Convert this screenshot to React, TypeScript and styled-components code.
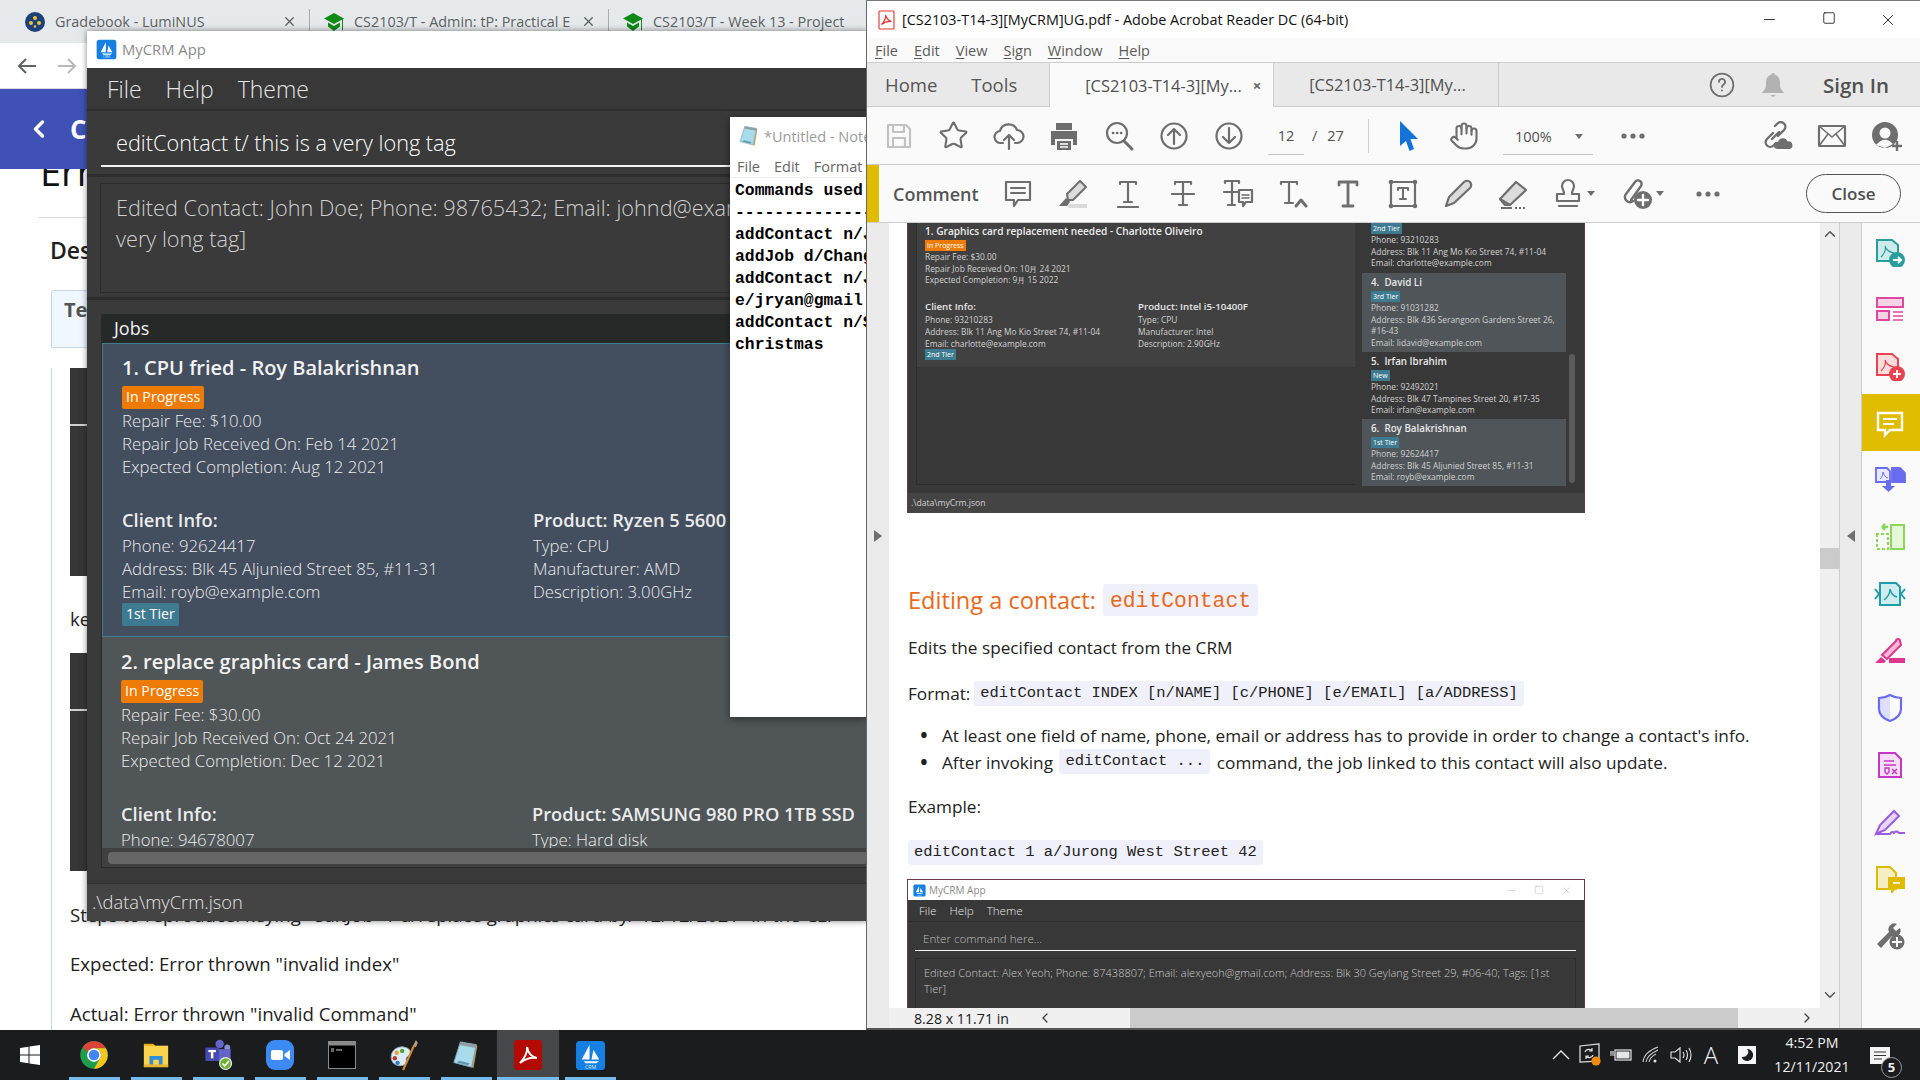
import React from "react";
import styled, { createGlobalStyle } from "styled-components";
import { ChevronLeft, ChevronRight, ChevronUp, ChevronDown, Hand, Star, X, Minus, Square } from "lucide-react";

const GlobalStyle = createGlobalStyle`
  html, body { margin: 0; padding: 0; background: #1b1c1e; }
  * { box-sizing: border-box; }
  body { font-family: "Open Sans", "Liberation Sans", sans-serif; }
  svg { flex: none; }
`;

const sans = `"Open Sans", "Liberation Sans", sans-serif`;
const mono = `"Liberation Mono", "DejaVu Sans Mono", monospace`;

/* ---------- desktop ---------- */
const Desktop = styled.div`
  width: 1920px;
  height: 1080px;
  display: flex;
  flex-direction: column;
  overflow: hidden;
`;
const WindowArea = styled.div`
  position: relative;
  height: 1030px;
  background: #fff;
`;

/* ---------- browser behind ---------- */
const BrowserWindow = styled.div`
  position: absolute;
  z-index: 0;
  left: 0;
  top: 0;
  width: 867px;
  height: 1030px;
  display: flex;
  flex-direction: column;
  background: #fff;
  overflow: hidden;
`;
const TabStrip = styled.div`
  height: 43px;
  background: #e6e9ec;
  display: flex;
  padding: 0 0 0 11px;
  align-items: center;
`;
const BrowserTab = styled.div`
  width: 299px;
  flex: none;
  height: 26px;
  padding: 0 12px 0 14px;
  display: flex;
  align-items: center;
  gap: 10px;
  border-right: 1px solid #a9acb0;
  font-size: 14.4px;
  color: #5c5f62;
  white-space: nowrap;
`;
const TabTitle = styled.span`
  flex: 1;
  overflow: hidden;
`;
const NavBar = styled.div`
  height: 46px;
  display: flex;
  align-items: center;
  gap: 16px;
  padding-left: 15px;
  border-bottom: 1px solid #dcdcdc;
`;
const BlueBand = styled.div`
  height: 80px;
  background: #3f51b5;
  display: flex;
  align-items: center;
  gap: 17px;
  padding-left: 25px;
  color: #fff;
  font-size: 26px;
  font-weight: 700;
  position: relative;
  z-index: 1;
`;
const PageBody = styled.div`
  flex: 1;
  padding-left: 38px;
  color: #1e1e1e;
  overflow: hidden;
`;
const PageHeading = styled.h1`
  margin: -27px 0 0;
  height: 76px;
  line-height: 58px;
  padding-left: 2px;
  font-size: 38px;
  font-weight: 500;
  color: #111;
  border-bottom: 1px solid #ddd;
`;
const PageSub = styled.h2`
  margin: 15px 0 0 12px;
  font-size: 23px;
  line-height: 34px;
  font-weight: 600;
`;
const TabHead = styled.div`
  margin: 23px 0 0 13px;
  height: 58px;
  background: #f1f7ff;
  border: 1px solid #c5d6ef;
  border-radius: 3px 3px 0 0;
  padding: 5px 0 0 12px;
  font-size: 20px;
  font-weight: 700;
  color: #555;
`;
const TabBody = styled.div`
  margin-left: 13px;
  padding-left: 18px;
  border-left: 1px solid #c5d6ef;
  height: 700px;
`;
const ShotBlock = styled.div<{ $h: number; $mt: number }>`
  width: 760px;
  height: ${(p) => p.$h}px;
  margin-top: ${(p) => p.$mt}px;
  background: #363636;
  padding-top: 56px;
`;
const ShotLine = styled.div`
  height: 2px;
  background: #cfcfcf;
`;
const BugText = styled.p<{ $mt: number }>`
  margin: ${(p) => p.$mt}px 0 0;
  font-size: 18.6px;
  line-height: 30px;
  white-space: nowrap;
  color: #222;
`;

/* ---------- MyCRM window ---------- */
const CrmWindow = styled.div`
  position: absolute;
  left: 87px;
  top: 31px;
  width: 781px;
  height: 890px;
  display: flex;
  flex-direction: column;
  background: #3a3a3a;
  box-shadow: 0 0 6px rgba(0, 0, 0, 0.5);
  overflow: hidden;
`;
const CrmTitleBar = styled.div`
  height: 37px;
  padding-bottom: 1px;
  background: #fff;
  display: flex;
  align-items: center;
  gap: 5px;
  padding-left: 9px;
  font-size: 14.8px;
  color: #8a8a8a;
`;
const CrmMenu = styled.div`
  height: 43px;
  background: #383838;
  display: flex;
  align-items: center;
  gap: 24px;
  padding-left: 20px;
  font-size: 23px;
  font-weight: 300;
  color: #e6e6e6;
  border-bottom: 2px solid #2e2e2e;
`;
const CommandBox = styled.div`
  height: 66px;
  padding: 12px 0 0 14px;
  border-bottom: 3px solid #2d2d2d;
`;
const CommandInput = styled.div`
  height: 44px;
  padding-left: 15px;
  line-height: 40px;
  border-bottom: 2px solid #f4f4f4;
  font-size: 21.7px;
  font-weight: 300;
  color: #fff;
  white-space: nowrap;
`;
const ResultBox = styled.div`
  height: 123px;
  padding: 6px 0 0 13px;
  border-bottom: 3px solid #2d2d2d;
`;
const ResultInner = styled.div`
  height: 110px;
  border: 1px solid #2b2b2b;
  padding: 8px 0 0 15px;
  font-size: 21.7px;
  font-weight: 300;
  line-height: 31px;
  color: #d0d0d0;
  white-space: nowrap;
`;
const JobsPanel = styled.div`
  margin: 14px 0 0 14px;
  height: 554px;
  display: flex;
  flex-direction: column;
  border-bottom: 1px solid #2b2b2b;
  border-left: 1px solid #2b2b2b;
`;
const JobsHeader = styled.div`
  height: 29px;
  flex: none;
  background: #272828;
  padding-left: 12px;
  line-height: 29px;
  font-size: 18px;
  color: #f2f2f2;
`;
const JobsList = styled.div`
  flex: 1;
  overflow: hidden;
`;
const JobCard = styled.div<{ $selected?: boolean }>`
  height: 294px;
  padding: ${(p) => (p.$selected ? 10 : 11)}px 0 0 19px;
  background: ${(p) => (p.$selected ? "#434e5f" : "#505557")};
  border: ${(p) => (p.$selected ? "1px solid #3d7f90" : "none")};
  border-right: none;
  color: #ececec;
  font-size: 16.75px;
  line-height: 23px;
  font-weight: 300;
  white-space: nowrap;
`;
const JobTitle = styled.div`
  font-size: 20px;
  line-height: 28px;
  font-weight: 600;
  color: #f2f2f2;
`;
const Badge = styled.span<{ $color: string }>`
  display: block;
  width: fit-content;
  height: 23px;
  padding: 0 4px;
  border-radius: 2px;
  background: ${(p) => p.$color};
  color: #fff;
  font-size: 14.2px;
  line-height: 22px;
  font-weight: 400;
`;
const StatusBadge = styled(Badge)`
  margin: 4px 0 0;
`;
const InfoColumns = styled.div`
  display: grid;
  grid-template-columns: 411px 1fr;
  margin-top: 28px;
`;
const InfoHead = styled.div`
  font-size: 18.25px;
  line-height: 28px;
  font-weight: 600;
  color: #ececec;
`;
const HScroll = styled.div`
  height: 19px;
  flex: none;
  background: #3f3f3f;
  padding: 4px 0 3px 6px;
`;
const HThumb = styled.div`
  height: 100%;
  background: #666;
  border-radius: 4px;
`;
const CrmStatus = styled.div`
  margin-top: 15px;
  height: 38px;
  background: #444;
  border-top: 1px solid #323232;
  padding-left: 5px;
  line-height: 35px;
  font-size: 18.3px;
  font-weight: 300;
  color: #e2e2e2;
`;

/* ---------- notepad ---------- */
const NotepadWindow = styled.div`
  position: absolute;
  left: 730px;
  top: 117px;
  width: 137px;
  height: 600px;
  background: #fff;
  box-shadow: 0 2px 8px rgba(0, 0, 0, 0.45);
  overflow: hidden;
  white-space: nowrap;
`;
const NoteTitle = styled.div`
  height: 38px;
  display: flex;
  align-items: center;
  gap: 4px;
  padding-left: 8px;
  font-size: 14.5px;
  color: #9a9a9a;
`;
const NoteMenu = styled.div`
  height: 23px;
  display: flex;
  gap: 14px;
  padding-left: 7px;
  align-items: center;
  font-size: 14.5px;
  color: #666;
  border-bottom: 1px solid #eee;
`;
const NoteText = styled.div`
  padding: 2px 0 0 5px;
  font-family: ${mono};
  font-weight: 700;
  font-size: 16.4px;
  line-height: 22px;
  color: #000;
`;

/* ---------- acrobat ---------- */
const AcrobatWindow = styled.div`
  position: absolute;
  left: 866px;
  top: 0;
  width: 1054px;
  height: 1030px;
  display: flex;
  flex-direction: column;
  background: #fafafa;
  border-left: 1px solid #666;
  border-top: 1px solid #777;
  border-bottom: 2px solid #555;
  font-family: ${sans};
  color: #505050;
  overflow: hidden;
`;
const AcroTitle = styled.div`
  height: 37px;
  flex: none;
  background: #fff;
  display: flex;
  align-items: center;
  padding-left: 11px;
  gap: 7px;
  font-size: 14.4px;
  color: #111;
`;
const WinButtons = styled.div`
  margin-left: auto;
  display: flex;
  padding-right: 3px;
  color: #111;
`;
const WinButton = styled.span`
  width: 59px;
  display: flex;
  justify-content: center;
`;
const AcroMenu = styled.div`
  height: 25px;
  flex: none;
  display: flex;
  align-items: center;
  gap: 16px;
  padding-left: 8px;
  font-size: 14.5px;
  color: #5a5a5a;
  border-bottom: 1px solid #cdcdcd;
  u { text-underline-offset: 2px; }
`;
const AcroTabs = styled.div`
  height: 44px;
  flex: none;
  display: flex;
  align-items: stretch;
  background: #e9e9e9;
  border-bottom: 1px solid #cdcdcd;
`;
const TopLink = styled.div<{ $pl: number }>`
  display: flex;
  align-items: center;
  padding-left: ${(p) => p.$pl}px;
  font-size: 18.5px;
  color: #555;
`;
const DocTab = styled.div<{ $active?: boolean }>`
  width: 225px;
  padding-left: 35px;
  display: flex;
  align-items: center;
  font-size: 16.4px;
  color: #505050;
  white-space: nowrap;
  border-right: 1px solid #cdcdcd;
  background: ${(p) => (p.$active ? "#fafafa" : "transparent")};
  border-left: ${(p) => (p.$active ? "1px solid #cdcdcd" : "none")};
  margin-bottom: ${(p) => (p.$active ? "-1px" : "0")};
  margin-left: ${(p) => (p.$active ? "32px" : "0")};
`;
const TabClose = styled.span`
  margin-left: 11px;
  font-size: 15px;
  font-weight: 700;
  color: #666;
`;
const TabRight = styled.div`
  margin-left: auto;
  display: flex;
  align-items: center;
  padding-right: 31px;
`;
const BellIcon = styled.svg`
  margin-left: 25px;
`;
const SignIn = styled.span`
  margin-left: 38px;
  font-size: 20.5px;
  font-weight: 600;
  color: #505050;
`;
const ToolRow = styled.div`
  height: 58px;
  flex: none;
  display: flex;
  align-items: center;
  padding-left: 4px;
  border-bottom: 1px solid #cdcdcd;
`;
const CommentRow = styled(ToolRow)`
  padding-left: 0;
`;
const IconCell = styled.div<{ $ml?: number; $caret?: boolean }>`
  width: 55px;
  height: 40px;
  flex: none;
  display: flex;
  align-items: center;
  justify-content: center;
  gap: ${(p) => (p.$caret ? 3 : 0)}px;
  padding-left: ${(p) => (p.$caret ? 10 : 0)}px;
  margin-left: ${(p) => p.$ml ?? 0}px;
`;
const PageField = styled.div`
  margin-left: 12px;
  width: 36px;
  height: 36px;
  padding-top: 3px;
  text-align: center;
  font-size: 14.5px;
  line-height: 28px;
  color: #505050;
  border-bottom: 1px solid #c4c4c4;
  margin-top: 2px;
`;
const PageTotal = styled.div`
  margin-left: 8px;
  width: 33px;
  display: flex;
  gap: 10px;
  font-size: 14.5px;
  color: #505050;
`;
const ToolSep = styled.div`
  width: 1px;
  height: 34px;
  margin-left: 23px;
  background: #cfcfcf;
`;
const ZoomField = styled.div`
  margin-left: 12px;
  width: 90px;
  height: 36px;
  margin-top: 2px;
  display: flex;
  align-items: center;
  padding: 0 0 0 12px;
  gap: 23px;
  font-size: 14.5px;
  border-bottom: 1px solid #c4c4c4;
`;
const Caret = styled.span`
  width: 0;
  height: 0;
  flex: none;
  border-left: 4.5px solid transparent;
  border-right: 4.5px solid transparent;
  border-top: 5px solid #6e6e6e;
`;
const RowEnd = styled.div`
  margin-left: auto;
  display: flex;
  align-items: center;
  padding-right: 6px;
`;
const CommentStripe = styled.div`
  width: 12px;
  height: 100%;
  background: #e0bc00;
`;
const CommentLabel = styled.div`
  width: 111.5px;
  padding-left: 14px;
  font-size: 18px;
  font-weight: 600;
  color: #555;
`;
const CloseButton = styled.div`
  margin-left: auto;
  margin-right: 19px;
  width: 95px;
  height: 39px;
  border: 1.5px solid #555;
  border-radius: 20px;
  display: flex;
  align-items: center;
  justify-content: center;
  font-size: 17px;
  font-weight: 600;
  color: #505050;
`;
const DocRow = styled.div`
  flex: 1;
  min-height: 0;
  display: flex;
  background: #fff;
`;
const LeftGutter = styled.div`
  width: 22px;
  flex: none;
  background: #ebebeb;
  display: flex;
  align-items: center;
  justify-content: center;
  padding-bottom: 180px;
`;
const DocColumn = styled.div`
  flex: 1;
  min-width: 0;
  display: flex;
  flex-direction: column;
`;
const DocPage = styled.div`
  flex: 1;
  min-height: 0;
  overflow: hidden;
  padding-left: 19px;
  background: #fff;
  font-size: 17.2px;
  color: #222;
`;
const HBar = styled.div`
  height: 20px;
  flex: none;
  display: flex;
  align-items: center;
  background: #f0f0f0;
  padding-right: 5px;
`;
const SizeLabel = styled.div`
  width: 126px;
  padding-left: 3px;
  margin-left: 22px;
  font-size: 14.2px;
  color: #1b1b1b;
`;
const HBarThumb = styled.div`
  flex: 1;
  height: 100%;
  margin: 0 61px 0 77px;
  background: #cbcbcb;
`;
const VScroll = styled.div`
  width: 20px;
  flex: none;
  background: #f0f0f0;
  padding-top: 2px;
  display: flex;
  flex-direction: column;
  align-items: center;
  border-right: 1px solid #cdcdcd;
  color: #555;
`;
const VThumb = styled.div`
  width: 19px;
  height: 21px;
  margin-top: 305px;
  margin-bottom: 417px;
  background: #cbcbcb;
`;
const SideCollapse = styled.div`
  width: 22px;
  flex: none;
  background: #ebebeb;
  border-right: 1px solid #cdcdcd;
  display: flex;
  align-items: center;
  justify-content: center;
  padding-bottom: 180px;
`;
const ToolRail = styled.div`
  width: 58px;
  flex: none;
  background: #fafafa;
  display: flex;
  flex-direction: column;
  align-items: stretch;
`;
const RailItem = styled.div<{ $active?: boolean }>`
  height: 57px;
  padding-right: 3px;
  display: flex;
  align-items: center;
  justify-content: center;
  background: ${(p) => (p.$active ? "#e0bc00" : "transparent")};
`;

/* pdf content */
const Shot = styled.div`
  margin-left: -1px;
  width: 678px;
  height: 290px;
  background: #383838;
  display: flex;
  flex-direction: column;
  border-left: 1px solid #6a3a48;
  border-right: 1px solid #6a3a48;
  color: #d2d2d2;
  font-size: 8.4px;
  line-height: 11.7px;
  white-space: nowrap;
  overflow: hidden;
`;
const ShotBody = styled.div`
  height: 262px;
  margin-bottom: 8px;
  display: flex;
  padding-left: 8px;
  flex: none;
`;
const MiniPanel = styled.div`
  width: 439px;
  flex: none;
  border-bottom: 1px solid #2e2e2e;
  border-left: 1px solid #2e2e2e;
`;
const MiniCard = styled.div`
  height: 144px;
  background: #414141;
  padding-left: 8px;
`;
const MiniJobTitle = styled.div`
  font-size: 10.15px;
  line-height: 17px;
  font-weight: 600;
  color: #ececec;
`;
const MiniBadge = styled.span<{ $color: string }>`
  display: block;
  width: fit-content;
  height: 11px;
  padding: 0 2px;
  background: ${(p) => p.$color};
  color: #fff;
  font-size: 7px;
  line-height: 11px;
`;
const MiniColumns = styled.div`
  display: grid;
  grid-template-columns: 213px 1fr;
  margin-top: 14px;
`;
const MiniHead = styled.div`
  font-size: 9.7px;
  line-height: 14px;
  font-weight: 600;
  color: #e6e6e6;
`;
const MiniList = styled.div`
  width: 204px;
  margin-left: 7px;
  flex: none;
`;
const MiniPerson = styled.div<{ $alt?: boolean }>`
  padding: 2px 0 3px 9px;
  background: ${(p) => (p.$alt ? "#4f5558" : "transparent")};
`;
const PersonName = styled.div`
  font-size: 9.8px;
  line-height: 16px;
  font-weight: 600;
  color: #e9e9e9;
`;
const PersonTop = styled.div`
  padding: 0 0 3px 9px;
  height: 50px;
`;
const MiniTrack = styled.div`
  width: 6px;
  margin-left: 3px;
  padding-top: 131px;
`;
const MiniThumb = styled.div`
  height: 129px;
  background: #5b5b5b;
  border-radius: 3px;
`;
const ShotStatus = styled.div`
  flex: 1;
  background: #444;
  padding-left: 3px;
  line-height: 20px;
  font-size: 8.6px;
`;
const DocHeading = styled.h3`
  margin: 71px 0 0;
  display: flex;
  align-items: center;
  gap: 7px;
  height: 32px;
  font-size: 23.6px;
  font-weight: 400;
  color: #e8681c;
`;
const HeadingCode = styled.code`
  height: 32px;
  padding: 0 7px;
  background: #f0f0fb;
  border-radius: 3px;
  font-family: ${mono};
  font-size: 21.4px;
  line-height: 34px;
  color: #e8681c;
`;
const DocPara = styled.p<{ $mt: number }>`
  margin: ${(p) => p.$mt}px 0 0;
  line-height: 25px;
  height: 25px;
  white-space: nowrap;
`;
const InlineCode = styled.code`
  display: inline-block;
  height: 25px;
  padding: 0 6px;
  margin: 0 2px;
  background: #f0f0fb;
  border-radius: 3px;
  font-family: ${mono};
  font-size: 15.45px;
  line-height: 25px;
  vertical-align: top;
  color: #222;
`;
const FormatCode = styled(InlineCode)`
  margin-left: 4px;
`;
const BulletList = styled.ul`
  margin: 16px 0 0;
  padding: 0 0 0 34px;
  list-style: none;
  line-height: 27px;
  white-space: nowrap;
  li::before {
    content: "•";
    display: inline-block;
    width: 23px;
    margin-left: -23px;
    font-size: 26px;
    line-height: 20px;
    vertical-align: -2px;
  }
`;
const BlockCode = styled(InlineCode)`
  display: block;
  width: fit-content;
  margin: 21px 0 0;
`;
const SecondShot = styled.div`
  margin: 14px 0 0 -1px;
  width: 678px;
  height: 130px;
  background: #383838;
  color: #c9c9c9;
  white-space: nowrap;
  overflow: hidden;
  border: 1px solid #6a3a48;
  border-bottom: none;
`;
const ShotTitle = styled.div`
  height: 20px;
  background: #fff;
  display: flex;
  align-items: center;
  padding-left: 5px;
  gap: 3px;
  font-size: 10px;
  color: #8a8a8a;
`;
const ShotWinButtons = styled.div`
  margin-left: auto;
  display: flex;
  gap: 17px;
  padding-right: 12px;
  color: #aaa;
`;
const ShotMenu = styled.div`
  height: 22px;
  display: flex;
  align-items: center;
  gap: 13px;
  padding-left: 11px;
  font-size: 11.6px;
  font-weight: 300;
  color: #e4e4e4;
  border-bottom: 1px solid #2e2e2e;
`;
const ShotInput = styled.div`
  margin: 0 8px 0 7px;
  height: 29px;
  padding: 7px 0 0 8px;
  line-height: 19px;
  font-size: 11.6px;
  font-weight: 300;
  color: #bdbdbd;
  border-bottom: 1.5px solid #f4f4f4;
`;
const ShotResult = styled.div`
  margin: 7px 8px 0 7px;
  height: 60px;
  border: 1px solid #2c2c2c;
  padding: 6px 0 0 8px;
  font-size: 11px;
  font-weight: 300;
  line-height: 16px;
`;

/* ---------- taskbar ---------- */
const Taskbar = styled.div`
  height: 50px;
  flex: none;
  background: #1b1c1e;
  display: flex;
  align-items: stretch;
  color: #fff;
`;
const StartButton = styled.div`
  width: 63px;
  display: flex;
  align-items: center;
  justify-content: center;
  padding-right: 4px;
`;
const TaskItem = styled.div<{ $active?: boolean }>`
  width: 62px;
  position: relative;
  display: flex;
  align-items: center;
  justify-content: center;
  background: ${(p) => (p.$active ? "#45474b" : "transparent")};
  &::after {
    content: "";
    position: absolute;
    bottom: 0;
    left: ${(p) => (p.$active ? 0 : 6)}px;
    right: ${(p) => (p.$active ? 0 : 5)}px;
    height: 3px;
    background: #76b9ed;
  }
`;
const Tray = styled.div`
  margin-left: auto;
  display: flex;
  align-items: center;
`;
const TrayIcon = styled.div<{ $ml?: number }>`
  width: 30px;
  margin-left: ${(p) => p.$ml ?? 0}px;
  display: flex;
  align-items: center;
  justify-content: center;
`;
const TrayLetter = styled.span`
  font-size: 24px;
  line-height: 1;
  font-weight: 300;
  color: #f0f0f0;
`;
const Clock = styled.div`
  width: 86px;
  margin-left: 7px;
  text-align: center;
  font-size: 14.2px;
  line-height: 24px;
  color: #efefef;
`;
const NotifyWrap = styled.div`
  position: relative;
  width: 42px;
  margin: 0 18px 0 5px;
  display: flex;
  padding-left: 10px;
`;
const NotifyCount = styled.span`
  position: absolute;
  left: 21px;
  top: 10px;
  width: 21px;
  height: 21px;
  border-radius: 50%;
  border: 1px solid #999;
  background: #1b1c1e;
  text-align: center;
  font-size: 13px;
  line-height: 19px;
  font-weight: 700;
  color: #eee;
`;

/* ---------- icons ---------- */
const G = "#6e6e6e";
const Line = ({ children, size = 32, color = G, w = 2.2 }: { children: React.ReactNode; size?: number; color?: string; w?: number }) => (
  <svg width={size} height={size} viewBox="0 0 32 32" fill="none" stroke={color} strokeWidth={w} strokeLinecap="round" strokeLinejoin="round">
    {children}
  </svg>
);

const CrmLogo = ({ size }: { size: number }) => (
  <svg width={size} height={size} viewBox="0 0 32 32">
    <rect x="1" y="1" width="30" height="30" rx="4" fill="#1580e2" />
    <path d="M7 20 L15 5 L15 20Z M17 20 L19 10 L25 20Z M9 22 H25 L22 24 H11Z" fill="#fff" />
    <text x="16" y="29.5" fontSize="5.4" fill="#cfe6fb" textAnchor="middle" fontFamily="Open Sans">CRM</text>
  </svg>
);
const NotepadIcon = ({ size }: { size: number }) => (
  <svg width={size} height={size} viewBox="0 0 32 32">
    <path d="M10 2 L27 5 L22 29 L3 24Z" fill="#a9dcea" stroke="#7fa8b4" />
    <path d="M22 29 L27 5 L28 7 L24 30Z" fill="#b69a6b" />
    <path d="M10 2 L27 5 L26.2 8.4 L9 5.2Z" fill="#8f9ea4" />
    <path d="M9 22 L20 25 L18 27 L6 24Z" fill="#5f96a8" />
  </svg>
);
const PdfTitleIcon = () => (
  <svg width="17" height="20" viewBox="0 0 17 20" fill="none" stroke="#e5312a" strokeWidth="1.1">
    <path d="M2 1 H15 a1 1 0 0 1 1 1 V18 a1 1 0 0 1-1 1 H2 a1 1 0 0 1-1-1 V2 a1 1 0 0 1 1-1z" />
    <path d="M3.5 14.5 C6 12 8 8 7.5 5 C8.5 8 10 10.5 13.5 11.5 C10 11 6.5 12 3.5 14.5z" />
  </svg>
);
const LumiIcon = () => (
  <svg width="20" height="20" viewBox="0 0 20 20">
    <circle cx="10" cy="10" r="10" fill="#1d3f7a" />
    <circle cx="10" cy="6" r="2" fill="#f0c430" />
    <circle cx="6" cy="11" r="2" fill="#f0c430" />
    <circle cx="14" cy="11" r="2" fill="#f0c430" />
    <circle cx="10" cy="14.5" r="1.3" fill="#f0c430" />
  </svg>
);
const CapIcon = () => (
  <svg width="20" height="22" viewBox="0 0 20 22">
    <path d="M10 2 L20 7.5 L10 13 L0 7.5Z" fill="#0e8a16" />
    <path d="M4 11.5 L10 15 L16 11.5 V15.5 L10 20 L4 15.5Z" fill="#0e8a16" />
    <path d="M18.5 8 V19" stroke="#0e8a16" strokeWidth="1" />
  </svg>
);
const Triangle = ({ dir }: { dir: "l" | "r" }) => (
  <svg width="10" height="14" viewBox="0 0 10 14">
    <path d={dir === "l" ? "M9 1 V13 L1 7Z" : "M1 1 V13 L9 7Z"} fill="#6e6e6e" />
  </svg>
);

const toolIcons = {
  save: (
    <Line color="#c2c2c2">
      <path d="M5 5 H23 L27 9 V27 H5Z M10 5 V12 H21 V5 M10 27 V18 H22 V27" />
    </Line>
  ),
  print: (
    <svg width="32" height="32" viewBox="0 0 32 32" fill={G}>
      <path d="M8 3 H24 V10 H8Z M3 11 H29 V25 H25 V19 H7 V25 H3Z M9 21 H23 V30 H9Z" />
      <path d="M12 24 H20 M12 27 H20" stroke="#fff" strokeWidth="1.4" />
    </svg>
  ),
  cloud: (
    <Line>
      <path d="M10 23 H8 a6 6 0 0 1-1-12 a9 9 0 0 1 17-1 a6.5 6.5 0 0 1 0 13 H22" />
      <path d="M16 29 V15 M11 20 L16 15 L21 20" />
    </Line>
  ),
  search: (
    <Line>
      <circle cx="14" cy="13" r="10" />
      <path d="M21 21 L29 29" strokeWidth="3" />
      <path d="M10 13 H10.2 M14 13 H14.2 M18 13 H18.2" strokeWidth="2.6" />
    </Line>
  ),
  up: (
    <Line>
      <circle cx="16" cy="16" r="12.5" />
      <path d="M16 24 V9 M10 15 L16 9 L22 15" />
    </Line>
  ),
  down: (
    <Line>
      <circle cx="16" cy="16" r="12.5" />
      <path d="M16 8 V23 M10 17 L16 23 L22 17" />
    </Line>
  ),
  cursor: (
    <svg width="24" height="32" viewBox="0 0 24 32">
      <path d="M3 1 L21 19 H13.5 L17 29 L12.5 31 L9 21 L3 26Z" fill="#1473d8" />
    </svg>
  ),
  more: (
    <svg width="24" height="6" viewBox="0 0 24 6" fill={G}>
      <circle cx="3" cy="3" r="2.6" />
      <circle cx="12" cy="3" r="2.6" />
      <circle cx="21" cy="3" r="2.6" />
    </svg>
  ),
  link: (
    <svg width="32" height="30" viewBox="0 0 32 30" fill="none" stroke={G} strokeWidth="2.4" strokeLinecap="round">
      <path d="M12 12 L6 18 a4.5 4.5 0 0 0 6.5 6.5 L15 22 M17 15 L23 9 a4.5 4.5 0 0 0-6.5-6.5 L14 5 M11 18 L18 11" />
      <path d="M16 28 a3.5 3.5 0 0 1 1-7 a5 5 0 0 1 9.5-0.5 a3.8 3.8 0 0 1 2 7.5Z" fill={G} stroke="none" />
    </svg>
  ),
  mail: (
    <Line>
      <rect x="3" y="6" width="26" height="20" rx="1" />
      <path d="M3 6 L16 17 L29 6 M3 26 L12 14 M29 26 L20 14" strokeWidth="1.6" />
    </Line>
  ),
  user: (
    <svg width="32" height="30" viewBox="0 0 32 30">
      <circle cx="14" cy="14" r="13" fill={G} />
      <circle cx="14" cy="12" r="5.5" fill="#fafafa" />
      <path d="M5 24 Q14 14 22 23 L14 27Z" fill="#fafafa" />
      <path d="M21 25 H31 M26 20 V30" stroke={G} strokeWidth="2.4" />
    </svg>
  ),
  comment: (
    <Line>
      <path d="M4 4 H28 V22 H16 L12 28 V22 H4Z" />
      <path d="M9 10 H23 M9 15 H23" strokeWidth="2" />
    </Line>
  ),
  highlight: (
    <svg width="32" height="32" viewBox="0 0 32 32">
      <path d="M10 16 L23 3 L29 9 L16 22 L11 22Z" fill="#dcdcdc" stroke="#6e6e6e" strokeWidth="2" strokeLinejoin="round" />
      <path d="M2 28 L9 20 L13 24 L10 28Z" fill="#6e6e6e" />
      <rect x="11" y="26" width="19" height="4" fill="#dadada" />
    </svg>
  ),
  tUnder: (
    <Line>
      <path d="M8 6 V4 H24 V6 M16 4 V24 M12 24 H20 M6 29 H26" />
    </Line>
  ),
  tStrike: (
    <Line>
      <path d="M8 6 V4 H24 V6 M16 4 V27 M12 27 H20 M5 16 H27" />
    </Line>
  ),
  tNote: (
    <Line>
      <path d="M3 5 V3 H17 V5 M10 3 V27 M6 27 H13 M2 14 H16" />
      <path d="M17 12 H30 V24 H24 L21 28 V24 H17Z" />
      <path d="M20 17 H27 M20 20 H27" strokeWidth="1.5" />
    </Line>
  ),
  tInsert: (
    <Line>
      <path d="M4 6 V4 H20 V6 M12 4 V25 M8 25 H16" />
      <path d="M19 28 L24 22 L29 28" strokeWidth="3" />
    </Line>
  ),
  t: (
    <Line>
      <path d="M7 7 V4 H25 V7 M16 4 V28 M11 28 H21" strokeWidth="2.8" />
    </Line>
  ),
  tBox: (
    <Line>
      <rect x="4" y="4" width="24" height="24" />
      <circle cx="4" cy="4" r="1.2" fill={G} />
      <circle cx="28" cy="4" r="1.2" fill={G} />
      <circle cx="4" cy="28" r="1.2" fill={G} />
      <circle cx="28" cy="28" r="1.2" fill={G} />
      <path d="M11 12 V10 H21 V12 M16 10 V21 M13 21 H19" strokeWidth="2" />
    </Line>
  ),
  pencil: (
    <svg width="32" height="32" viewBox="0 0 32 32" fill="none" stroke={G} strokeWidth="2.2" strokeLinejoin="round">
      <path d="M4 28 L7 19 L22 4 a3 3 0 0 1 6 6 L12 25Z" fill="#dcdcdc" />
    </svg>
  ),
  eraser: (
    <svg width="32" height="32" viewBox="0 0 32 32" fill="none" stroke={G} strokeWidth="2.2" strokeLinejoin="round">
      <path d="M3 21 L19 4 L29 12 L13 27 H8Z" fill="#dcdcdc" />
      <path d="M3 21 L13 27 M4 30 H15" />
      <path d="M18 30 H28" strokeDasharray="2 2" />
    </svg>
  ),
  stamp: (
    <Line>
      <path d="M12 16 C12 12 10 11 10 8 a6 6 0 0 1 12 0 C22 11 20 12 20 16 H27 V23 H5 V16Z M7 28 H25" />
    </Line>
  ),
  attach: (
    <svg width="32" height="32" viewBox="0 0 32 32" fill="none" stroke={G} strokeWidth="2.4" strokeLinecap="round">
      <path d="M10 22 L20 8 a3.5 3.5 0 0 0-6-4 L5 16 a5 5 0 0 0 7 7" />
      <circle cx="22" cy="22" r="9" fill={G} stroke="none" />
      <path d="M22 17 V27 M17 22 H27" stroke="#fff" />
    </svg>
  ),
};

const railIcons = [
  <svg key="0" width="30" height="30" viewBox="0 0 30 30" fill="none" stroke="#2a9d9d" strokeWidth="2">
    <path d="M2 3 H17 L23 8 V24 H2Z" fill="#cdebea" />
    <path d="M6 20 C10 16 11 12 10 9 C11 13 14 15 19 16" strokeWidth="1.2" />
    <circle cx="22" cy="23" r="7" fill="#2a9d9d" />
    <path d="M18 23 H26 M23 20 L26 23 L23 26" stroke="#fff" />
  </svg>,
  <svg key="1" width="30" height="26" viewBox="0 0 30 26" fill="none" stroke="#e0479e" strokeWidth="2">
    <rect x="2" y="2" width="26" height="9" fill="#f8d3e6" />
    <rect x="2" y="15" width="12" height="9" fill="#f8d3e6" />
    <path d="M18 16 H28 M18 20 H28 M18 24 H28" strokeWidth="1.3" />
  </svg>,
  <svg key="2" width="30" height="30" viewBox="0 0 30 30" fill="none" stroke="#e8434f" strokeWidth="2">
    <path d="M2 3 H17 L23 8 V24 H2Z" fill="#fbdcdc" />
    <path d="M6 20 C10 16 11 12 10 9 C11 13 14 15 19 16" strokeWidth="1.2" />
    <circle cx="22" cy="23" r="7" fill="#e8434f" />
    <path d="M18 23 H26 M22 19 V27" stroke="#fff" />
  </svg>,
  <svg key="3" width="30" height="30" viewBox="0 0 30 30" fill="none" stroke="#fff" strokeWidth="2.4">
    <path d="M3 5 H27 V22 H15 L10 27 V22 H3Z" />
    <path d="M8 11 H22 M8 16 H19" strokeWidth="2" />
  </svg>,
  <svg key="4" width="32" height="30" viewBox="0 0 32 30" fill="none" stroke="#6a6cf0" strokeWidth="1.8">
    <path d="M2 3 H13 L16 6 V17 H2Z" fill="#e8e9fd" />
    <path d="M18 3 H26 L31 8 V17 H18Z" fill="#6a6cf0" />
    <path d="M6 14 C8 12 9 10 9 7 C10 10 11 12 14 13" strokeWidth="1" />
    <path d="M12 15 H17 V21 H21 L14.5 27 L8 21 H12Z" fill="#6a6cf0" stroke="none" />
  </svg>,
  <svg key="5" width="30" height="28" viewBox="0 0 30 28" fill="none" stroke="#8bd75a" strokeWidth="2">
    <path d="M2 11 V26 H13 V11Z" strokeDasharray="3 2" />
    <rect x="16" y="2" width="13" height="24" fill="#e5f6da" />
    <path d="M13 4 L7 4 M7 4 L10 1 M7 4 L10 7" strokeWidth="2.4" />
  </svg>,
  <svg key="6" width="32" height="26" viewBox="0 0 32 26" fill="none" stroke="#1f9ca7" strokeWidth="2">
    <path d="M6 2 H22 L26 6 V24 H6Z" fill="#cfecee" />
    <path d="M1 8 L5 13 L1 18 M31 8 L27 13 L31 18" />
    <path d="M10 19 C14 16 16 13 16 8 C17 12 19 15 23 16" strokeWidth="1.4" />
  </svg>,
  <svg key="7" width="32" height="26" viewBox="0 0 32 26">
    <path d="M8 17 L22 3 a2 2 0 0 1 4 0 L27 7 L13 21Z" fill="#f3b9d6" stroke="#e0368f" strokeWidth="2" />
    <path d="M1 25 L7 19 L12 23 L10 25Z M15 20 H31 V25 H15Z" fill="#e0368f" />
  </svg>,
  <svg key="8" width="26" height="30" viewBox="0 0 26 30" fill="none" stroke="#6a6cf0" strokeWidth="2.2">
    <path d="M13 2 Q8 5 2 5 V16 Q2 24 13 28Z" fill="#dedffc" stroke="none" />
    <path d="M2 5 Q8 5 13 2 Q18 5 24 5 V16 Q24 24 13 28 Q2 24 2 16Z" />
  </svg>,
  <svg key="9" width="26" height="28" viewBox="0 0 26 28" fill="none" stroke="#c637c8" strokeWidth="2">
    <path d="M2 2 H18 L24 8 V26 H2Z" fill="#f6def7" />
    <path d="M7 10 H17 M7 14 H19" strokeWidth="1.4" />
    <path d="M8 17 H12 V21 L10 23 L8 21Z M15 18 L20 23 M20 18 L15 23" strokeWidth="1.4" />
  </svg>,
  <svg key="10" width="32" height="28" viewBox="0 0 32 28" fill="none" stroke="#9d5be0" strokeWidth="2">
    <path d="M2 26 L6 17 L20 3 L25 8 L11 22Z" fill="#e6d6f8" />
    <path d="M2 26 H16 C18 23 19 24 20 25 C22 22 24 24 25 25 H31" />
  </svg>,
  <svg key="11" width="30" height="28" viewBox="0 0 30 28" fill="none" stroke="#e0bc00" strokeWidth="2">
    <path d="M2 2 H15 L21 8 V24 H2Z" fill="#f7efc4" />
    <path d="M14 13 H29 V23 H20 L17 27 V23 H14Z" fill="#e0bc00" />
    <path d="M18 18 H25" stroke="#fff" strokeWidth="1.5" />
  </svg>,
  <svg key="12" width="30" height="28" viewBox="0 0 30 28">
    <path d="M2 22 L14 10 a6 6 0 0 1 8-8 L18 6 L21 9 L25 6 a6 6 0 0 1-8 8 L6 26Z" fill="#6e6e6e" />
    <circle cx="22" cy="20" r="7.5" fill="#6e6e6e" />
    <path d="M22 15 V25 M17 20 H27" stroke="#fff" strokeWidth="2" />
  </svg>,
];

const taskIcons = [
  <svg key="chrome" width="30" height="30" viewBox="0 0 48 48">
    <circle cx="24" cy="24" r="22" fill="#1e9e4a" />
    <path d="M24 2 A22 22 0 0 1 43 13 H24 A11 11 0 0 0 14 20 L6 11 A22 22 0 0 1 24 2Z" fill="#db4437" />
    <path d="M43 13 A22 22 0 0 1 24 46 L33.5 29.5 A11 11 0 0 0 24 13Z" fill="#f5c518" />
    <circle cx="24" cy="24" r="11" fill="#fff" />
    <circle cx="24" cy="24" r="8.5" fill="#4285f4" />
  </svg>,
  <svg key="files" width="28" height="28" viewBox="0 0 28 30">
    <path d="M1 3 H11 L14 6 H1Z" fill="#e8a91a" />
    <rect x="1" y="5" width="26" height="23" fill="#fbd34c" />
    <path d="M7 26 V16 H21 V26 H17 V20 H11 V26Z" fill="#2f8fd6" />
    <rect x="1" y="25" width="26" height="3" fill="#e8b530" />
  </svg>,
  <svg key="teams" width="32" height="32" viewBox="0 0 38 38">
    <circle cx="21" cy="6" r="5" fill="#6264c8" />
    <circle cx="30" cy="10" r="3.5" fill="#8b8cd6" />
    <path d="M14 12 H34 V26 H14Z" fill="#6264c8" />
    <rect x="4" y="10" width="16" height="16" rx="1" fill="#464ab0" />
    <rect x="10.5" y="13" width="3" height="10" fill="#fff" />
    <rect x="7.5" y="13" width="9" height="2.6" fill="#fff" />
    <circle cx="28" cy="29" r="7" fill="#6bb22e" stroke="#e8e8e8" strokeWidth="1.5" />
    <path d="M24.5 29 L27 32 L32 26" stroke="#fff" strokeWidth="2" fill="none" />
  </svg>,
  <svg key="zoom" width="28" height="30" viewBox="0 0 28 30">
    <rect width="28" height="30" rx="9" fill="#3d8af5" />
    <rect x="5" y="10" width="12" height="10" rx="2" fill="#fff" />
    <path d="M18.5 14 L24 10 V20 L18.5 16Z" fill="#fff" />
  </svg>,
  <svg key="cmd" width="28" height="28" viewBox="0 0 28 28">
    <rect x="0.5" y="0.5" width="27" height="27" fill="#000" stroke="#8a8a8a" />
    <rect x="1" y="1" width="26" height="3.5" fill="#8a8a8a" />
    <path d="M3 8 H6 M3 10 H6 M8 9 H14" stroke="#ccc" strokeWidth="1" />
  </svg>,
  <svg key="paint" width="30" height="33" viewBox="0 0 32 36">
    <path d="M2 21 C1 12 10 7 17 9 C25 11 24 17 20 19 C16 21 21 26 17 28 C10 31 3 28 2 21Z" fill="#d9edf7" stroke="#8fa6b2" />
    <circle cx="8" cy="15" r="2.4" fill="#e4a531" />
    <circle cx="14" cy="13" r="2.4" fill="#5a9e3a" />
    <circle cx="6" cy="21" r="2.4" fill="#c23a2e" />
    <circle cx="9" cy="26" r="2.4" fill="#2f7cc4" />
    <path d="M15 34 L27 7" stroke="#d68a2c" strokeWidth="2.4" />
    <path d="M26 7 L29 1 L31 4 L29 9Z" fill="#b9a27a" />
  </svg>,
  <NotepadIcon key="note" size={30} />,
  <svg key="acro" width="28" height="30" viewBox="0 0 28 30">
    <rect width="28" height="30" rx="3" fill="#b30b00" />
    <path d="M6 23 C10 19 14 12 13 7 C14 12 17 17 23 18 C17 17 11 19 6 23Z" fill="none" stroke="#fff" strokeWidth="2" />
  </svg>,
  <CrmLogo key="crm" size={31} />,
];

const Job = ({
  title, selected, fee, received, expected, phone, address, email, tier, product, type, maker, desc,
}: {
  title: string; selected?: boolean; fee: string; received: string; expected: string; phone: string;
  address?: string; email?: string; tier?: string; product: string; type: string; maker?: string; desc?: string;
}) => (
  <JobCard $selected={selected}>
    <JobTitle>{title}</JobTitle>
    <StatusBadge $color="#ee7b06">In Progress</StatusBadge>
    <div>Repair Fee: {fee}</div>
    <div>Repair Job Received On: {received}</div>
    <div>Expected Completion: {expected}</div>
    <InfoColumns>
      <div>
        <InfoHead>Client Info:</InfoHead>
        <div>Phone: {phone}</div>
        <div>Address: {address}</div>
        <div>Email: {email}</div>
        {tier && <Badge $color="#3e7b91">{tier}</Badge>}
      </div>
      <div>
        <InfoHead>Product: {product}</InfoHead>
        <div>Type: {type}</div>
        <div>Manufacturer: {maker}</div>
        <div>Description: {desc}</div>
      </div>
    </InfoColumns>
  </JobCard>
);

const Person = ({ name, tier, lines, alt }: { name: string; tier: string; lines: string[]; alt?: boolean }) => (
  <MiniPerson $alt={alt}>
    <PersonName>{name}</PersonName>
    <MiniBadge $color="#3e7b91">{tier}</MiniBadge>
    {lines.map((l) => (
      <div key={l}>{l}</div>
    ))}
  </MiniPerson>
);

const App = () => (
  <Desktop>
    <GlobalStyle />
    <WindowArea>
      <BrowserWindow>
        <TabStrip>
          <BrowserTab><LumiIcon /><TabTitle>Gradebook - LumiNUS</TabTitle><X size={15} /></BrowserTab>
          <BrowserTab><CapIcon /><TabTitle>CS2103/T - Admin: tP: Practical E</TabTitle><X size={15} /></BrowserTab>
          <BrowserTab><CapIcon /><TabTitle>CS2103/T - Week 13 - Project</TabTitle></BrowserTab>
        </TabStrip>
        <NavBar>
          <svg width="24" height="24" viewBox="0 0 24 24" fill="none" stroke="#5f6368" strokeWidth="2"><path d="M21 12 H4 M11 5 L4 12 L11 19" /></svg>
          <svg width="24" height="24" viewBox="0 0 24 24" fill="none" stroke="#b8b8b8" strokeWidth="2"><path d="M3 12 H20 M13 5 L20 12 L13 19" /></svg>
        </NavBar>
        <BlueBand>
          <ChevronLeft size={28} strokeWidth={3} />
          <span>CS2103/T</span>
        </BlueBand>
        <PageBody>
          <PageHeading>Error</PageHeading>
          <PageSub>Description</PageSub>
          <TabHead>Test</TabHead>
          <TabBody>
            <ShotBlock $h={208} $mt={20}><ShotLine /></ShotBlock>
            <BugText $mt={28}>keying</BugText>
            <ShotBlock $h={218} $mt={19}><ShotLine /></ShotBlock>
            <BugText $mt={29}>Steps to reproduce: keying "editJob -1 d/replace graphics card by/ 12/12/2021" in the CLI</BugText>
            <BugText $mt={19}>Expected: Error thrown "invalid index"</BugText>
            <BugText $mt={20}>Actual: Error thrown "invalid Command"</BugText>
          </TabBody>
        </PageBody>
      </BrowserWindow>

      <CrmWindow>
        <CrmTitleBar><CrmLogo size={21} />MyCRM App</CrmTitleBar>
        <CrmMenu><span>File</span><span>Help</span><span>Theme</span></CrmMenu>
        <CommandBox>
          <CommandInput>editContact t/ this is a very long tag</CommandInput>
        </CommandBox>
        <ResultBox>
          <ResultInner>
            Edited Contact: John Doe; Phone: 98765432; Email: johnd@example.com; Tags: [this is a
            <br />
            very long tag]
          </ResultInner>
        </ResultBox>
        <JobsPanel>
          <JobsHeader>Jobs</JobsHeader>
          <JobsList>
            <Job
              selected
              title="1. CPU fried - Roy Balakrishnan"
              fee="$10.00"
              received="Feb 14 2021"
              expected="Aug 12 2021"
              phone="92624417"
              address="Blk 45 Aljunied Street 85, #11-31"
              email="royb@example.com"
              tier="1st Tier"
              product="Ryzen 5 5600"
              type="CPU"
              maker="AMD"
              desc="3.00GHz"
            />
            <Job
              title="2. replace graphics card - James Bond"
              fee="$30.00"
              received="Oct 24 2021"
              expected="Dec 12 2021"
              phone="94678007"
              product="SAMSUNG 980 PRO 1TB SSD"
              type="Hard disk"
            />
          </JobsList>
          <HScroll><HThumb /></HScroll>
        </JobsPanel>
        <CrmStatus>.\data\myCrm.json</CrmStatus>
      </CrmWindow>

      <NotepadWindow>
        <NoteTitle><NotepadIcon size={22} />*Untitled - Notepad</NoteTitle>
        <NoteMenu><span>File</span><span>Edit</span><span>Format</span></NoteMenu>
        <NoteText>
          <div>Commands used</div>
          <div>--------------</div>
          <div>addContact n/John</div>
          <div>addJob d/Change</div>
          <div>addContact n/Jake</div>
          <div>e/jryan@gmail.com</div>
          <div>addContact n/Sam</div>
          <div>christmas</div>
        </NoteText>
      </NotepadWindow>

      <AcrobatWindow>
        <AcroTitle>
          <PdfTitleIcon />
          [CS2103-T14-3][MyCRM]UG.pdf - Adobe Acrobat Reader DC (64-bit)
          <WinButtons>
            <WinButton><Minus size={17} strokeWidth={1.2} /></WinButton>
            <WinButton><Square size={14} strokeWidth={1.4} /></WinButton>
            <WinButton><X size={18} strokeWidth={1.2} /></WinButton>
          </WinButtons>
        </AcroTitle>
        <AcroMenu>
          <span><u>F</u>ile</span>
          <span><u>E</u>dit</span>
          <span><u>V</u>iew</span>
          <span><u>S</u>ign</span>
          <span><u>W</u>indow</span>
          <span><u>H</u>elp</span>
        </AcroMenu>
        <AcroTabs>
          <TopLink $pl={18}>Home</TopLink>
          <TopLink $pl={34}>Tools</TopLink>
          <DocTab $active>[CS2103-T14-3][My...<TabClose>×</TabClose></DocTab>
          <DocTab>[CS2103-T14-3][My...</DocTab>
          <TabRight>
            <Line size={28} w={2}>
              <circle cx="16" cy="16" r="13" />
              <path d="M12.5 12.5 a3.5 3.5 0 1 1 5 3.2 c-1 .6 -1.5 1.2 -1.5 2.6 M16 22 V22.3" />
            </Line>
            <BellIcon width="24" height="26" viewBox="0 0 24 26">
              <path d="M12 1 a2 2 0 0 1 2 2 C19 4 19 9 19 13 C19 17 22 19 23 21 H1 C2 19 5 17 5 13 C5 9 5 4 10 3 a2 2 0 0 1 2-2Z M9 23 H15 L12 25Z" fill="#b2b2b2" />
            </BellIcon>
            <SignIn>Sign In</SignIn>
          </TabRight>
        </AcroTabs>
        <ToolRow>
          <IconCell>{toolIcons.save}</IconCell>
          <IconCell><Star size={31} strokeWidth={1.6} color={G} /></IconCell>
          <IconCell>{toolIcons.cloud}</IconCell>
          <IconCell>{toolIcons.print}</IconCell>
          <IconCell>{toolIcons.search}</IconCell>
          <IconCell>{toolIcons.up}</IconCell>
          <IconCell>{toolIcons.down}</IconCell>
          <PageField>12</PageField>
          <PageTotal><span>/</span><span>27</span></PageTotal>
          <ToolSep />
          <IconCell $ml={12}>{toolIcons.cursor}</IconCell>
          <IconCell><Hand size={30} strokeWidth={1.7} color={G} /></IconCell>
          <ZoomField><span>100%</span><Caret /></ZoomField>
          <IconCell $ml={12}>{toolIcons.more}</IconCell>
          <RowEnd>
            <IconCell>{toolIcons.link}</IconCell>
            <IconCell>{toolIcons.mail}</IconCell>
            <IconCell>{toolIcons.user}</IconCell>
          </RowEnd>
        </ToolRow>
        <CommentRow>
          <CommentStripe />
          <CommentLabel>Comment</CommentLabel>
          <IconCell>{toolIcons.comment}</IconCell>
          <IconCell>{toolIcons.highlight}</IconCell>
          <IconCell>{toolIcons.tUnder}</IconCell>
          <IconCell>{toolIcons.tStrike}</IconCell>
          <IconCell>{toolIcons.tNote}</IconCell>
          <IconCell>{toolIcons.tInsert}</IconCell>
          <IconCell>{toolIcons.t}</IconCell>
          <IconCell>{toolIcons.tBox}</IconCell>
          <IconCell>{toolIcons.pencil}</IconCell>
          <IconCell>{toolIcons.eraser}</IconCell>
          <IconCell $caret>{toolIcons.stamp}<Caret /></IconCell>
          <IconCell $caret $ml={14}>{toolIcons.attach}<Caret /></IconCell>
          <IconCell $ml={16}>{toolIcons.more}</IconCell>
          <CloseButton>Close</CloseButton>
        </CommentRow>
        <DocRow>
          <LeftGutter><Triangle dir="r" /></LeftGutter>
          <DocColumn>
            <DocPage>
              <Shot>
                <ShotBody>
                  <MiniPanel>
                    <MiniCard>
                      <MiniJobTitle>1. Graphics card replacement needed - Charlotte Oliveiro</MiniJobTitle>
                      <MiniBadge $color="#ee7b06">In Progress</MiniBadge>
                      <div>Repair Fee: $30.00</div>
                      <div>Repair Job Received On: 10月 24 2021</div>
                      <div>Expected Completion: 9月 15 2022</div>
                      <MiniColumns>
                        <div>
                          <MiniHead>Client Info:</MiniHead>
                          <div>Phone: 93210283</div>
                          <div>Address: Blk 11 Ang Mo Kio Street 74, #11-04</div>
                          <div>Email: charlotte@example.com</div>
                          <MiniBadge $color="#3e7b91">2nd Tier</MiniBadge>
                        </div>
                        <div>
                          <MiniHead>Product: Intel i5-10400F</MiniHead>
                          <div>Type: CPU</div>
                          <div>Manufacturer: Intel</div>
                          <div>Description: 2.90GHz</div>
                        </div>
                      </MiniColumns>
                    </MiniCard>
                  </MiniPanel>
                  <MiniList>
                    <PersonTop>
                      <MiniBadge $color="#3e7b91">2nd Tier</MiniBadge>
                      <div>Phone: 93210283</div>
                      <div>Address: Blk 11 Ang Mo Kio Street 74, #11-04</div>
                      <div>Email: charlotte@example.com</div>
                    </PersonTop>
                    <Person alt name={"4.\u00a0 David Li"} tier="3rd Tier" lines={["Phone: 91031282", "Address: Blk 436 Serangoon Gardens Street 26,", "#16-43", "Email: lidavid@example.com"]} />
                    <Person name={"5.\u00a0 Irfan Ibrahim"} tier="New" lines={["Phone: 92492021", "Address: Blk 47 Tampines Street 20, #17-35", "Email: irfan@example.com"]} />
                    <Person alt name={"6.\u00a0 Roy Balakrishnan"} tier="1st Tier" lines={["Phone: 92624417", "Address: Blk 45 Aljunied Street 85, #11-31", "Email: royb@example.com"]} />
                  </MiniList>
                  <MiniTrack><MiniThumb /></MiniTrack>
                </ShotBody>
                <ShotStatus>.\data\myCrm.json</ShotStatus>
              </Shot>
              <DocHeading>Editing a contact: <HeadingCode>editContact</HeadingCode></DocHeading>
              <DocPara $mt={19}>Edits the specified contact from the CRM</DocPara>
              <DocPara $mt={21}>Format:<FormatCode>editContact INDEX [n/NAME] [c/PHONE] [e/EMAIL] [a/ADDRESS]</FormatCode></DocPara>
              <BulletList>
                <li>At least one field of name, phone, email or address has to provide in order to change a contact's info.</li>
                <li>After invoking <InlineCode>editContact ...</InlineCode> command, the job linked to this contact will also update.</li>
              </BulletList>
              <DocPara $mt={18}>Example:</DocPara>
              <BlockCode>editContact 1 a/Jurong West Street 42</BlockCode>
              <SecondShot>
                <ShotTitle>
                  <CrmLogo size={13} />MyCRM App
                  <ShotWinButtons>
                    <Minus size={11} strokeWidth={1} />
                    <Square size={10} strokeWidth={1} />
                    <X size={11} strokeWidth={1} />
                  </ShotWinButtons>
                </ShotTitle>
                <ShotMenu><span>File</span><span>Help</span><span>Theme</span></ShotMenu>
                <ShotInput>Enter command here...</ShotInput>
                <ShotResult>
                  Edited Contact: Alex Yeoh; Phone: 87438807; Email: alexyeoh@gmail.com; Address: Blk 30 Geylang Street 29, #06-40; Tags: [1st
                  <br />
                  Tier]
                </ShotResult>
              </SecondShot>
            </DocPage>
            <HBar>
              <SizeLabel>8.28 x 11.71 in</SizeLabel>
              <ChevronLeft size={16} color="#444" />
              <HBarThumb />
              <ChevronRight size={16} color="#444" />
            </HBar>
          </DocColumn>
          <VScroll>
            <ChevronUp size={18} />
            <VThumb />
            <ChevronDown size={18} />
          </VScroll>
          <SideCollapse><Triangle dir="l" /></SideCollapse>
          <ToolRail>
            {railIcons.map((icon, i) => (
              <RailItem key={i} $active={i === 3}>{icon}</RailItem>
            ))}
          </ToolRail>
        </DocRow>
      </AcrobatWindow>
    </WindowArea>

    <Taskbar>
      <StartButton>
        <svg width="20" height="20" viewBox="0 0 20 20" fill="#fff">
          <path d="M0 3 L8.5 1.8 V9.5 H0Z M9.5 1.6 L20 0 V9.5 H9.5Z M0 10.5 H8.5 V18.2 L0 17Z M9.5 10.5 H20 V20 L9.5 18.4Z" />
        </svg>
      </StartButton>
      {taskIcons.map((icon, i) => (
        <TaskItem key={i} $active={i === 7}>{icon}</TaskItem>
      ))}
      <Tray>
        <TrayIcon>
          <svg width="18" height="10" viewBox="0 0 18 10" fill="none" stroke="#e6e6e6" strokeWidth="1.4"><path d="M1 9 L9 1 L17 9" /></svg>
        </TrayIcon>
        <TrayIcon>
          <svg width="24" height="24" viewBox="0 0 24 24" fill="none" stroke="#e6e6e6" strokeWidth="1.2">
            <path d="M1 3 L20 1 V18 L1 19Z" />
            <path d="M6 9 a4 4 0 0 1 7-1 M13 5 V8 H10 M14 12 a4 4 0 0 1-7 1 M7 16 V13 H10" />
            <circle cx="17" cy="18" r="4.6" fill="#f28c0f" stroke="none" />
          </svg>
        </TrayIcon>
        <TrayIcon>
          <svg width="22" height="14" viewBox="0 0 22 14" fill="none" stroke="#e6e6e6" strokeWidth="1.2">
            <rect x="5" y="2" width="16" height="10" />
            <rect x="6.5" y="3.5" width="13" height="7" fill="#e6e6e6" stroke="none" />
            <path d="M0 7 H5 M1 3 V6 M3 3 V6" />
          </svg>
        </TrayIcon>
        <TrayIcon>
          <svg width="18" height="18" viewBox="0 0 18 18" fill="none" stroke="#cfcfcf" strokeWidth="1.1">
            <path d="M1 16 Q2 6 16 1 M4 16 Q5 9 16 4 M7 16 Q8 11 14 8" />
            <circle cx="13" cy="15" r="1.5" fill="#e6e6e6" stroke="none" />
          </svg>
        </TrayIcon>
        <TrayIcon>
          <svg width="22" height="18" viewBox="0 0 22 18" fill="none" stroke="#e6e6e6" strokeWidth="1.1">
            <path d="M1 6 H5 L10 2 V16 L5 12 H1Z M13 6 Q15 9 13 12 M16 4 Q19 9 16 14 M19 2 Q23 9 19 16" />
          </svg>
        </TrayIcon>
        <TrayIcon><TrayLetter>A</TrayLetter></TrayIcon>
        <TrayIcon $ml={6}>
          <svg width="18" height="18" viewBox="0 0 18 18">
            <rect width="18" height="18" fill="#f6f6f6" />
            <path d="M9 3 A6 6 0 1 1 3.5 11 A6 5 0 0 0 9 3Z" fill="#1b1c1e" />
          </svg>
        </TrayIcon>
        <Clock>4:52 PM<br />12/11/2021</Clock>
        <NotifyWrap>
          <svg width="21" height="17" viewBox="0 0 21 17">
            <path d="M0 0 H20 V17 H0Z" fill="#f4f4f4" />
            <path d="M4 5 H16 M4 8.5 H16 M4 12 H12" stroke="#333" strokeWidth="1.2" />
          </svg>
          <NotifyCount>5</NotifyCount>
        </NotifyWrap>
      </Tray>
    </Taskbar>
  </Desktop>
);

export default App;
